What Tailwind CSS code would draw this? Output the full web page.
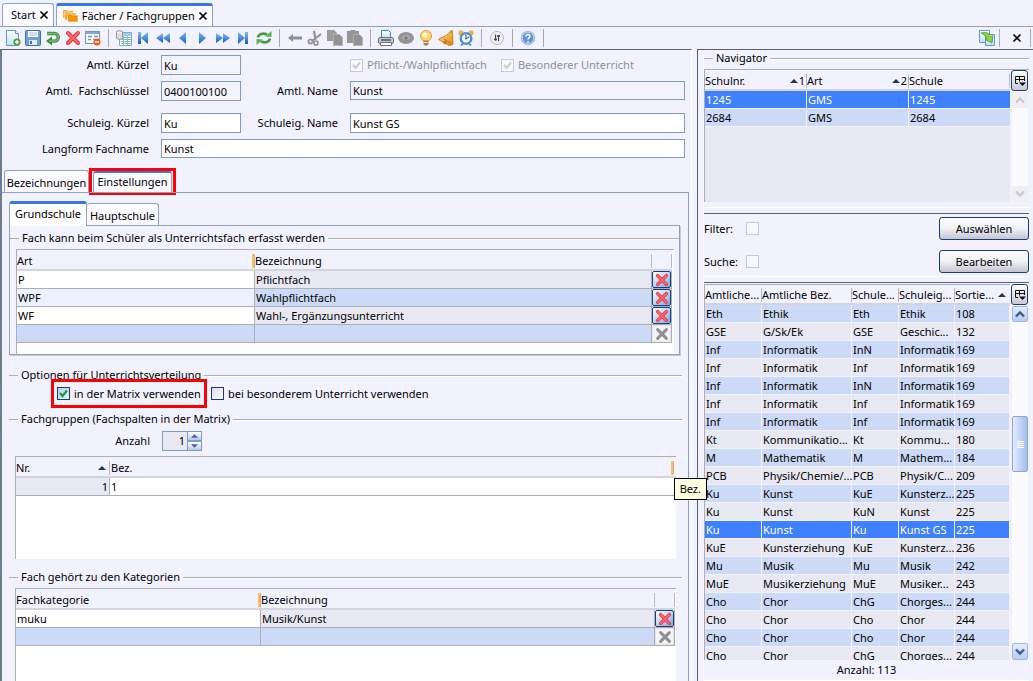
<!DOCTYPE html>
<html lang="de">
<head>
<meta charset="utf-8">
<title>Fächer / Fachgruppen</title>
<script src="https://cdn.jsdelivr.net/npm/@tailwindcss/browser@4"></script>
</head>
<body class="h-screen overflow-hidden bg-[#f2f2ff] font-['Noto_Sans','Open_Sans',sans-serif] text-[11px] leading-4 text-black">
<svg class="absolute size-0" aria-hidden="true">
  <defs>
    <linearGradient id="blue" x1="0" y1="0" x2="0" y2="1"><stop offset="0" stop-color="#7cbcf8"/><stop offset="1" stop-color="#1c5cc4"/></linearGradient>
    <linearGradient id="page" x1="0" y1="0" x2="0" y2="1"><stop offset="0" stop-color="#fff"/><stop offset="1" stop-color="#bfe0f8"/></linearGradient>
    <linearGradient id="gold" x1="0" y1="0" x2="1" y2="1"><stop offset="0" stop-color="#ffe08a"/><stop offset="1" stop-color="#e08a10"/></linearGradient>
    <symbol id="cross" viewBox="0 0 16 16"><path d="M3 3l10 10M13 3L3 13" stroke="#e2343c" stroke-width="4" stroke-linecap="round"/><path d="M3 3l10 10M13 3L3 13" stroke="#ff6464" stroke-width="2.4" stroke-linecap="round"/></symbol>
    <symbol id="cross-off" viewBox="0 0 16 16"><path d="M3 3l10 10M13 3L3 13" stroke="#8f8f8f" stroke-width="3.4" stroke-linecap="round"/></symbol>
    <symbol id="close" viewBox="0 0 10 10"><path d="M1.500 1.500l7 7M8.500 1.500l-7 7" stroke="#000" stroke-width="1.700"/></symbol>
    <symbol id="sort" viewBox="0 0 8 4"><path d="M4 0l4 4H0z" fill="#24364f"/></symbol>
    <symbol id="columns" viewBox="0 0 12 12"><path d="M4 8.500H1.500v-7h9V6M1.500 4.500h9M5.500 1.500v5" stroke="#111" fill="none"/><path d="M5 7.500h7L8.500 11z" fill="#111"/></symbol>
    <symbol id="chev-up" viewBox="0 0 10 8"><path d="M1 6.500l4-4 4 4" stroke="currentColor" stroke-width="2.400" fill="none"/></symbol>
    <symbol id="chev-down" viewBox="0 0 10 8"><path d="M1 1.500l4 4 4-4" stroke="currentColor" stroke-width="2.400" fill="none"/></symbol>
  </defs>
</svg>

<div class="flex h-full flex-col">
  <!-- Document tabs -->
  <nav class="flex h-[26px] shrink-0 items-end gap-0.5 pl-0.5 pt-[3px]">
    <div class="flex h-full items-center gap-[3px] rounded-t-[3px] border border-b-0 border-[#8ea2bd] bg-[#fafaff] pl-2 pr-1">
      <button type="button">Start</button>
      <button type="button" aria-label="Start schließen"><svg class="size-[10px]"><use href="#close"/></svg></button>
    </div>
    <div class="flex h-full items-center gap-[3px] rounded-t-[3px] border border-b-0 border-t-[3px] border-[#8ea2bd] border-t-[#3875ef] bg-[#fafaff] pl-1.5 pr-1">
      <svg class="h-[14px] w-4" viewBox="0 0 16 14"><path d="M0 1h4l1 1h5v7H0z" fill="#fbb040"/><path d="M2 3h4l1 1h6v7H2z" fill="#f59a10" stroke="#fff" stroke-width=".6"/><path d="M4 5h4l1 1h6v7H5z" fill="#f39200" stroke="#fff" stroke-width=".6"/></svg>
      <button type="button">Fächer / Fachgruppen</button>
      <button type="button" aria-label="Fächer schließen"><svg class="size-[10px]"><use href="#close"/></svg></button>
    </div>
  </nav>

  <!-- Toolbar -->
  <div class="flex h-[23px] shrink-0 items-center gap-1 border-t border-[#8ea2bd] pl-[5px] pr-0.5">
    <button type="button" aria-label="Neu"><svg class="size-4" viewBox="0 0 16 16"><path d="M1.500.500h9l3 3v12h-12z" fill="url(#page)" stroke="#5f9ad0"/><path d="M10.500.500v3h3" fill="#fff" stroke="#5f9ad0"/><circle cx="12" cy="12" r="3.600" fill="#5a9e2f"/><path d="M12 10v4M10 12h4" stroke="#fff" stroke-width="1.300"/></svg></button>
    <button type="button" aria-label="Speichern"><svg class="size-4" viewBox="0 0 16 16"><rect x=".5" y=".5" width="15" height="15" rx="1" fill="#6f9fd8" stroke="#3c6fb4"/><path d="M3 1h10v6H3z" fill="#fff"/><path d="M4 3h8M4 5h8" stroke="#a8bcd8"/><path d="M4 10h8v5H4z" fill="#e4edf8"/><path d="M5 11h2v3H5z" fill="#3c6fb4"/></svg></button>
    <button type="button" aria-label="Rückgängig"><svg class="size-4" viewBox="0 0 16 16"><path d="M2 3.500h7.500a3.800 3.800 0 010 7.600H6" stroke="#3b8c3b" stroke-width="3.400" fill="none"/><path d="M7 6.500v9L1 11z" fill="#3b8c3b"/><path d="M2 3.500h7.500a3.800 3.800 0 010 7.600H4" stroke="#79bd70" stroke-width="1.500" fill="none"/></svg></button>
    <button type="button" aria-label="Löschen"><svg class="size-4"><use href="#cross"/></svg></button>
    <button type="button" aria-label="Formular leeren"><svg class="size-4" viewBox="0 0 16 16"><rect x=".5" y="1.500" width="14" height="12" fill="#fff" stroke="#6f94c4"/><path d="M1 2h13v2H1z" fill="#7fa8dc"/><path d="M3 6.500h4M3 9.500h3M9 6.500h4M8 9.500h3" stroke="#7d93b4" stroke-width="1.500"/><circle cx="12" cy="12" r="3.500" fill="#e0641c"/><path d="M10 12h4" stroke="#fff" stroke-width="1.300"/></svg></button>
    <span class="mx-[3px] h-[18px] w-px bg-[#a9a9b4]"></span>
    <button type="button" aria-label="Tabellenansicht"><svg class="size-4" viewBox="0 0 16 16"><path d="M3.500 2.500h12v13h-12z" fill="#fff" stroke="#7fa8cf"/><path d="M4 3h11v3H4z" fill="#a9cbe8"/><path d="M5 7.500h10M5 9.500h10M5 11.500h10M5 13.500h10" stroke="#7fbf86"/><path d="M7.500 6v9M11.500 6v9" stroke="#8fb4dc"/><path d="M.5 1.500q3-2 6 0v7q-3 2-6 0z" fill="#dcdcdc" stroke="#9a9a9a"/><path d="M1 2.500q2.500 1 5 0" stroke="#fff" fill="none"/></svg></button>
    <button type="button" aria-label="Erster"><svg class="size-4" viewBox="0 0 16 16"><path d="M2 2h3v12H2zM12 2v12L5 8z" fill="url(#blue)"/></svg></button>
    <button type="button" aria-label="Seite zurück"><svg class="size-4" viewBox="0 0 16 16"><path d="M7 3v10L0 8zM14 3v10L7 8z" fill="url(#blue)"/></svg></button>
    <button type="button" aria-label="Zurück"><svg class="size-4" viewBox="0 0 16 16"><path d="M10 2v12L3 8z" fill="url(#blue)"/></svg></button>
    <button type="button" aria-label="Weiter"><svg class="size-4" viewBox="0 0 16 16"><path d="M3 2v12l7-6z" fill="url(#blue)"/></svg></button>
    <button type="button" aria-label="Seite vor"><svg class="size-4" viewBox="0 0 16 16"><path d="M0 3v10l7-5zM7 3v10l7-5z" fill="url(#blue)"/></svg></button>
    <button type="button" aria-label="Letzter"><svg class="size-4" viewBox="0 0 16 16"><path d="M2 2v12l7-6zM9 2h3v12H9z" fill="url(#blue)"/></svg></button>
    <button type="button" aria-label="Aktualisieren"><svg class="size-4" viewBox="0 0 16 16"><path d="M2 7.500C2.500 4 7 2.500 11 4.500M14 8.500c-.5 3.500-5 5-9 3" stroke="#4a9a48" stroke-width="2.600" fill="none"/><path d="M9 6.500l6.500.5V1zM7 9.500L.5 9v6z" fill="#5cae55"/></svg></button>
    <span class="mx-[3px] h-[18px] w-px bg-[#a9a9b4]"></span>
    <button type="button" aria-label="Pfeil"><svg class="size-4" viewBox="0 0 16 16"><path d="M1 8l5-4v2.500h9v3H6V12z" fill="#8e8e8e"/></svg></button>
    <button type="button" aria-label="Ausschneiden"><svg class="size-4" viewBox="0 0 16 16"><path d="M7 1l1.500 9M14 4L5 11" stroke="#929292" stroke-width="2.200"/><circle cx="3.500" cy="11.500" r="2" fill="none" stroke="#929292" stroke-width="1.700"/><circle cx="9" cy="13" r="2" fill="none" stroke="#929292" stroke-width="1.700"/></svg></button>
    <button type="button" aria-label="Kopieren"><svg class="size-4" viewBox="0 0 16 16"><path d="M0 0h7l3 3v8H0z" fill="#9c9c9c"/><path d="M6.500 4.500h6l3 3v8h-9z" fill="#929292" stroke="#b4b4b4" stroke-width=".8"/></svg></button>
    <button type="button" aria-label="Einfügen"><svg class="size-4" viewBox="0 0 16 16"><path d="M0 1h3l1-1h4l1 1h3v12H0z" fill="#969696"/><path d="M6.500 4.500h6l3 3v8h-9z" fill="#929292" stroke="#b4b4b4" stroke-width=".8"/></svg></button>
    <span class="mx-[3px] h-[18px] w-px bg-[#a9a9b4]"></span>
    <button type="button" aria-label="Drucken"><svg class="size-4" viewBox="0 0 16 16"><path d="M3.500.500h7l2 2v6h-9z" fill="url(#page)" stroke="#3b84cc"/><rect x=".5" y="7.500" width="15" height="6" rx="1.500" fill="#c9c9cf" stroke="#6f6f78"/><path d="M3 10h10" stroke="#4e4e58" stroke-width="1.500"/><path d="M2.500 12.500h11v3h-11z" fill="#fff" stroke="#6f6f78"/></svg></button>
    <button type="button" aria-label="Vorschau"><svg class="size-4" viewBox="0 0 16 16"><ellipse cx="8" cy="8" rx="8" ry="6" fill="#949494"/><ellipse cx="8" cy="7.500" rx="4" ry="2.500" fill="#a9a9a9"/><circle cx="8" cy="8" r="1.600" fill="#777"/></svg></button>
    <button type="button" aria-label="Tipp"><svg class="size-4" viewBox="0 0 16 16"><circle cx="8" cy="6" r="5.500" fill="#ffd468" stroke="#f0a030"/><circle cx="7" cy="5" r="2.500" fill="#fffbe0"/><path d="M5.500 10.500h5v4l-1.500 1H7l-1.500-1z" fill="#a87a58"/><path d="M5.500 12.500h5" stroke="#ecd8c4"/></svg></button>
    <button type="button" aria-label="Signal"><svg class="size-4" viewBox="0 0 16 16"><path d="M14.500 1L15 14.500 11 15.500.5 9.500C3 6.500 8 7.500 12 1.500z" fill="url(#gold)" stroke="#b87414" stroke-width=".8"/><circle cx="7" cy="12.500" r="1.800" fill="#c47a10"/><path d="M6 9l7 4.500" stroke="#b87414"/><circle cx="13.500" cy="1.500" r="1.500" fill="#d8941c"/></svg></button>
    <button type="button" aria-label="Wecker"><svg class="size-4" viewBox="0 0 16 16"><circle cx="3" cy="3" r="2.700" fill="#f4b23c"/><circle cx="13" cy="3" r="2.700" fill="#f4b23c"/><path d="M3 15.500l2-2M13 15.500l-2-2" stroke="#3f78b8" stroke-width="1.500"/><circle cx="8" cy="8.500" r="5.300" fill="#fff" stroke="#4a92d8" stroke-width="2.400"/><path d="M8 5v4l3-2" stroke="#3468a8" stroke-width="1.200" fill="none"/></svg></button>
    <span class="mx-[3px] h-[18px] w-px bg-[#a9a9b4]"></span>
    <button type="button" aria-label="Einstellungen"><svg class="size-4" viewBox="0 0 16 16"><circle cx="8" cy="8" r="6.500" fill="#f1f1f1" stroke="#b4b4b4"/><path d="M6.500 4.500v6M9.500 5v6" stroke="#444" stroke-width="1.200"/><path d="M5 9.500h3M8 6h3" stroke="#444" stroke-width="1.600"/></svg></button>
    <span class="mx-[3px] h-[18px] w-px bg-[#a9a9b4]"></span>
    <button type="button" aria-label="Hilfe"><svg class="size-4" viewBox="0 0 16 16"><circle cx="8" cy="8" r="6.800" fill="#5b94d4" stroke="#a9bcd4"/><circle cx="8" cy="8" r="5.800" fill="none" stroke="#dce9f8" stroke-width=".8"/><path d="M6 6.500c0-3 4.200-2.600 4 0-.1 1.300-2 1.400-2 3M8 11v1.400" stroke="#fff" stroke-width="1.500" fill="none"/></svg></button>
    <span class="mx-[3px] h-[18px] w-px bg-[#a9a9b4]"></span>
    <span class="flex-1"></span>
    <button type="button" aria-label="Ansicht wechseln"><svg class="size-4" viewBox="0 0 16 16"><path d="M.5.5h10v12H.5z" fill="url(#page)" stroke="#5f9ad0"/><path d="M6.500 4.500h9v11h-9z" fill="url(#page)" stroke="#5f9ad0"/><path d="M2 3c5-1.500 8 0 9.500 3.500L14 5.500 13 13 6 9.500l2-.8C7 6 5 4.500 2 3z" fill="#8fd43c" stroke="#3f8c28" stroke-width=".7"/></svg></button>
    <span class="h-[18px] w-px bg-[#a9a9b4]"></span>
    <button type="button" class="ml-2 mr-1" aria-label="Schließen"><svg class="size-[10px]"><use href="#close"/></svg></button>
    <span class="h-[18px] w-px bg-[#a9a9b4]"></span>
  </div>

  <div class="flex min-h-0 flex-1 gap-[5px]">
    <!-- Detail form -->
    <main class="relative flex min-w-0 flex-1 flex-col border-l-2 border-r border-t border-l-[#6f7c90] border-r-white border-t-[#5c5f6c]">
      <form class="grid shrink-0 grid-cols-[147px_80px_85px_minmax(0,1fr)] gap-x-3 pr-1.5 pt-[5px]">
        <label for="ak" class="self-center text-right">Amtl. Kürzel</label>
        <input id="ak" readonly value="Ku" class="h-5 border border-[#7f9bbd] bg-[#f4f4ff] px-0.5">
        <div class="col-start-4 flex items-center">
          <label class="flex items-center gap-1 text-[#8f8f98]"><span class="relative flex size-[13px]"><input type="checkbox" checked disabled class="size-[13px] appearance-none border border-[#c9c9d4] bg-[#f8f8fb]"><svg class="pointer-events-none absolute inset-0 size-[13px]" viewBox="0 0 13 13"><path d="M3 6l2.500 3L10 3.500" stroke="#c9c9d8" stroke-width="2" fill="none"/></svg></span>Pflicht-/Wahlpflichtfach</label>
          <label class="ml-[14px] flex items-center gap-1 text-[#8f8f98]"><span class="relative flex size-[13px]"><input type="checkbox" checked disabled class="size-[13px] appearance-none border border-[#c9c9d4] bg-[#f8f8fb]"><svg class="pointer-events-none absolute inset-0 size-[13px]" viewBox="0 0 13 13"><path d="M3 6l2.500 3L10 3.500" stroke="#c9c9d8" stroke-width="2" fill="none"/></svg></span>Besonderer Unterricht</label>
        </div>
        <label for="af" class="mt-1.5 self-center whitespace-pre text-right">Amtl.  Fachschlüssel</label>
        <input id="af" readonly value="0400100100" class="mt-1.5 h-5 border border-[#7f9bbd] bg-[#f4f4ff] px-0.5">
        <label for="an" class="mt-1.5 self-center text-right">Amtl. Name</label>
        <input id="an" readonly value="Kunst" class="mt-1.5 h-[19px] border border-[#7f9bbd] bg-[#f4f4ff] px-0.5">
        <label for="sk" class="mt-3 self-center text-right">Schuleig. Kürzel</label>
        <input id="sk" value="Ku" class="mt-3 h-5 border border-[#7f9bbd] bg-white px-0.5">
        <label for="sn" class="mt-3 self-center text-right">Schuleig. Name</label>
        <input id="sn" value="Kunst GS" class="mt-3 h-5 border border-[#7f9bbd] bg-white px-0.5">
        <label for="lf" class="mt-1.5 self-center text-right">Langform Fachname</label>
        <input id="lf" value="Kunst" class="col-span-3 mt-1.5 h-[19px] border border-[#7f9bbd] bg-white px-0.5">
      </form>

      <div role="tablist" class="mt-[10px] flex h-[27px] shrink-0 items-end pl-0.5">
        <button type="button" role="tab" class="mb-[3px] h-[22px] w-[85px] rounded-t-[3px] border border-b-0 border-[#8ea2bd] bg-[#fafaff] whitespace-nowrap pt-0.5">Bezeichnungen</button>
        <div class="h-[27px] w-[87px] border-[3px] border-[#ff0000] px-px"><button type="button" role="tab" aria-selected="true" class="h-[21px] w-full rounded-t-[3px] border border-b-0 border-t-2 border-[#8ea2bd] border-t-[#3875ef] bg-[#fafaff] whitespace-nowrap pb-0.5">Einstellungen</button></div>
      </div>

      <section class="-mt-[3px] mr-0.5 flex min-h-0 flex-1 flex-col border-r border-t border-[#8ea2bd] pl-[7px] pr-1.5">
        <div role="tablist" class="mt-2 flex h-6 shrink-0 items-end">
          <button type="button" role="tab" aria-selected="true" class="relative -mb-px h-[25px] w-[78px] rounded-t-[3px] border border-b-0 border-t-[3px] border-[#8ea2bd] border-t-[#3875ef] bg-white pb-0.5">Grundschule</button>
          <button type="button" role="tab" class="h-[22px] w-[72px] rounded-t-[3px] border border-b-0 border-l-0 border-[#8ea2bd] bg-[#fafaff] whitespace-nowrap pt-0.5">Hauptschule</button>
        </div>
        <div class="mr-0.5 h-[130px] shrink-0 overflow-hidden border border-[#8ea2bd] shadow-[1px_1px_0_#c9c9d4]">
          <fieldset>
            <div class="flex items-center gap-[3px] pt-1 whitespace-nowrap"><span class="h-px w-[9px] bg-[#adadb4]"></span><h2>Fach kann beim Schüler als Unterrichtsfach erfasst werden</h2><span class="h-px flex-1 bg-[#adadb4] shadow-[0_1px_0_white]"></span></div>
            <div class="ml-1.5 mr-[5px] mt-[3px] h-[120px] border-l border-t border-[#adadb4] bg-white">
              <table class="w-full table-fixed border-separate border-spacing-0">
                <colgroup><col class="w-[238px]"><col><col class="w-5"><col class="w-0.5"></colgroup>
                <thead><tr class="h-[21px] text-left">
                  <th class="border-b-2 border-[#d4d4de] bg-[#f2f2ff] p-0 pt-0.5 font-normal"><div class="flex items-center justify-between">Art<span class="h-[14px] w-[3px] border-r border-[#c4b49c] bg-[#fbbf5c]"></span></div></th>
                  <th class="border-b-2 border-[#d4d4de] bg-[#f2f2ff] p-0 pt-0.5 font-normal"><div class="flex items-center justify-between">Bezeichnung<span class="h-[14px] w-px bg-[#b9b9c4]"></span></div></th>
                  <th class="border-b-2 border-[#d4d4de] bg-[#f2f2ff] p-0 pt-0.5"><div class="ml-auto h-[14px] w-px bg-[#b9b9c4]"></div></th><th class="bg-[#fafaff] p-0"></th>
                </tr></thead>
                <tbody>
                  <tr class="h-[18px]"><td class="border-b border-r border-[#adadb4] bg-white py-0 pl-px leading-[17px]">P</td><td class="border-b border-r border-[#adadb4] bg-[#e8e8f2] py-0 pl-px leading-[17px]">Pflichtfach</td><td class="border-b border-r border-[#adadb4] p-0"><button type="button" aria-label="Löschen" class="flex h-[17px] w-[19px] items-center justify-center rounded-[2px] border border-[#163f78] bg-linear-to-br from-white to-[#7da7ea]"><svg class="size-[14px]"><use href="#cross"/></svg></button></td></tr>
                  <tr class="h-[18px]"><td class="border-b border-r border-[#adadb4] bg-[#ecf1ff] py-0 pl-px leading-[17px]">WPF</td><td class="border-b border-r border-[#adadb4] bg-[#ccdaf7] py-0 pl-px leading-[17px]">Wahlpflichtfach</td><td class="border-b border-r border-[#adadb4] p-0"><button type="button" aria-label="Löschen" class="flex h-[17px] w-[19px] items-center justify-center rounded-[2px] border border-[#163f78] bg-linear-to-br from-white to-[#7da7ea]"><svg class="size-[14px]"><use href="#cross"/></svg></button></td></tr>
                  <tr class="h-[18px]"><td class="border-b border-r border-[#adadb4] bg-white py-0 pl-px leading-[17px]">WF</td><td class="border-b border-r border-[#adadb4] bg-[#e8e8f2] py-0 pl-px leading-[17px]">Wahl-, Ergänzungsunterricht</td><td class="border-b border-r border-[#adadb4] p-0"><button type="button" aria-label="Löschen" class="flex h-[17px] w-[19px] items-center justify-center rounded-[2px] border border-[#163f78] bg-linear-to-br from-white to-[#7da7ea]"><svg class="size-[14px]"><use href="#cross"/></svg></button></td></tr>
                  <tr class="h-[18px]"><td class="border-b border-r border-[#adadb4] bg-[#ccdaf7] p-0"></td><td class="border-b border-r border-[#adadb4] bg-[#ccdaf7] p-0"></td><td class="border-b border-r border-[#adadb4] p-0"><button type="button" disabled aria-label="Löschen" class="flex h-[17px] w-[19px] items-center justify-center border border-[#e4e4ea] bg-[#f4f4f6]"><svg class="size-[14px]"><use href="#cross-off"/></svg></button></td></tr>
                </tbody>
              </table>
            </div>
          </fieldset>
        </div>

        <fieldset class="mt-3 shrink-0">
          <div class="flex items-center gap-[3px]"><span class="h-px w-[9px] bg-[#adadb4]"></span><h2>Optionen für Unterrichtsverteilung</h2><span class="h-px flex-1 bg-[#adadb4] shadow-[0_1px_0_white]"></span></div>
          <div class="relative -mt-1 ml-[42px] flex items-center gap-1">
            <label class="flex h-[29px] w-[156px] items-center gap-1 border-[3px] border-[#ff0000] pl-[3px] whitespace-nowrap"><span class="relative flex size-[13px]"><input type="checkbox" checked class="size-[13px] appearance-none border border-[#163f78] bg-linear-to-br from-[#b4cdf8] to-[#e4eeff]"><svg class="pointer-events-none absolute inset-0 size-[13px]" viewBox="0 0 13 13"><path d="M3 6l2.500 3L10 3.500" stroke="#1fa01f" stroke-width="2.200" fill="none"/></svg></span>in der Matrix verwenden</label>
            <label class="flex items-center gap-1 whitespace-nowrap"><input type="checkbox" class="size-[13px] appearance-none border border-[#163f78] bg-linear-to-br from-[#dcdce0] to-white">bei besonderem Unterricht verwenden</label>
          </div>
        </fieldset>

        <fieldset class="mt-[3px] shrink-0">
          <div class="flex items-center gap-[3px]"><span class="h-px w-[9px] bg-[#adadb4]"></span><h2>Fachgruppen (Fachspalten in der Matrix)</h2><span class="h-px flex-1 bg-[#adadb4] shadow-[0_1px_0_white]"></span></div>
          <div class="mt-1 flex items-center gap-3">
            <label for="anz" class="w-[141px] text-right">Anzahl</label>
            <div class="flex h-5">
              <input id="anz" value="1" class="w-[25px] border border-r-0 border-[#7f9bbd] bg-[#e8e8f2] pr-0.5 text-right">
              <div class="flex w-[15px] flex-col">
                <button type="button" aria-label="Mehr" class="flex flex-1 items-center justify-center border border-[#7f9bbd] bg-linear-to-b from-white to-[#b4c8ee]"><svg class="h-1 w-[7px]" viewBox="0 0 8 4"><path d="M4 0l4 4H0z" fill="#46648f"/></svg></button>
                <button type="button" aria-label="Weniger" class="flex flex-1 items-center justify-center border border-[#7f9bbd] bg-linear-to-b from-white to-[#b4c8ee]"><svg class="h-1 w-[7px]" viewBox="0 0 8 4"><path d="M0 0h8L4 4z" fill="#46648f"/></svg></button>
              </div>
            </div>
          </div>
          <div class="ml-1.5 mr-1.5 mt-[5px] h-[103px] border-l border-t border-[#adadb4] bg-white">
            <table class="w-full table-fixed border-separate border-spacing-0">
              <colgroup><col class="w-[94px]"><col></colgroup>
              <thead><tr class="h-[21px] text-left">
                <th class="border-b-2 border-[#d4d4de] bg-[#f2f2ff] p-0 pt-0.5 font-normal"><div class="flex items-center">Nr.<svg class="ml-auto h-1 w-2"><use href="#sort"/></svg><span class="ml-[3px] h-[14px] w-px bg-[#b9b9c4]"></span></div></th>
                <th class="border-b-2 border-[#d4d4de] bg-[#f2f2ff] p-0 pl-px pt-0.5 font-normal"><div class="flex items-center justify-between pr-0.5">Bez.<span class="h-[14px] w-[3px] border-r border-[#c4b49c] bg-[#fbbf5c]"></span></div></th>
              </tr></thead>
              <tbody><tr class="h-[18px]"><td class="border-b border-r border-[#adadb4] bg-[#e8e8f2] py-0 pr-px text-right leading-[17px]">1</td><td class="border-b border-[#adadb4] py-0 pl-px leading-[17px]">1</td></tr></tbody>
            </table>
          </div>
        </fieldset>

        <fieldset class="mt-[10px] shrink-0">
          <div class="flex items-center gap-[3px]"><span class="h-px w-[9px] bg-[#adadb4]"></span><h2>Fach gehört zu den Kategorien</h2><span class="h-px flex-1 bg-[#adadb4] shadow-[0_1px_0_white]"></span></div>
          <div class="ml-1.5 mr-1.5 mt-[3px] h-[120px] border-l border-t border-[#adadb4] bg-white">
            <table class="w-full table-fixed border-separate border-spacing-0">
              <colgroup><col class="w-[245px]"><col><col class="w-5"><col class="w-px"></colgroup>
              <thead><tr class="h-[21px] text-left">
                <th class="border-b-2 border-[#d4d4de] bg-[#f2f2ff] p-0 pt-0.5 font-normal"><div class="flex items-center justify-between">Fachkategorie<span class="h-[14px] w-[3px] border-r border-[#c4b49c] bg-[#fbbf5c]"></span></div></th>
                <th class="border-b-2 border-[#d4d4de] bg-[#f2f2ff] p-0 pt-0.5 font-normal"><div class="flex items-center justify-between">Bezeichnung<span class="h-[14px] w-px bg-[#b9b9c4]"></span></div></th>
                <th class="border-b-2 border-[#d4d4de] bg-[#f2f2ff] p-0 pt-0.5"><div class="ml-auto h-[14px] w-px bg-[#b9b9c4]"></div></th><th class="p-0"></th>
              </tr></thead>
              <tbody>
                <tr class="h-[18px]"><td class="border-b border-r border-[#adadb4] bg-white py-0 pl-px leading-[17px]">muku</td><td class="border-b border-r border-[#adadb4] bg-[#e8e8f2] py-0 pl-px leading-[17px]">Musik/Kunst</td><td class="border-b border-r border-[#adadb4] p-0"><button type="button" aria-label="Löschen" class="flex h-[17px] w-[19px] items-center justify-center rounded-[2px] border border-[#163f78] bg-linear-to-br from-white to-[#7da7ea]"><svg class="size-[14px]"><use href="#cross"/></svg></button></td></tr>
                <tr class="h-[18px]"><td class="border-b border-r border-[#adadb4] bg-[#ccdaf7] p-0"></td><td class="border-b border-r border-[#adadb4] bg-[#ccdaf7] p-0"></td><td class="border-b border-r border-[#adadb4] p-0"><button type="button" disabled aria-label="Löschen" class="flex h-[17px] w-[19px] items-center justify-center border border-[#e4e4ea] bg-[#f4f4f6]"><svg class="size-[14px]"><use href="#cross-off"/></svg></button></td></tr>
              </tbody>
            </table>
          </div>
        </fieldset>
      </section>
      <div role="tooltip" class="absolute -right-4 top-[428px] z-10 border border-black bg-[#ffffe1] px-[5px] py-0.5">Bez.</div>
    </main>

    <!-- Navigator -->
    <aside class="flex w-[336px] shrink-0 flex-col border-l border-t border-[#5c5f6c] pl-1.5 pr-1">
      <div class="flex shrink-0 items-center gap-[3px]"><span class="h-px w-[9px] bg-[#adadb4]"></span><h2>Navigator</h2><span class="h-px flex-1 bg-[#adadb4] shadow-[0_1px_0_white]"></span></div>
      <div class="mt-[3px] flex h-[133px] shrink-0 border-l border-t border-[#adadb4]">
        <div class="min-w-0 flex-1 bg-[#e8e8f2]">
          <table class="w-full table-fixed border-separate border-spacing-0">
            <colgroup><col class="w-[102px]"><col class="w-[102px]"><col></colgroup>
            <thead><tr class="h-[21px] text-left">
              <th class="border-b-2 border-[#d4d4de] bg-[#f2f2ff] p-0 pt-0.5 font-normal"><div class="flex items-center">Schulnr.<svg class="ml-auto mr-px h-1 w-2"><use href="#sort"/></svg>1<span class="ml-px h-[14px] w-px bg-[#b9b9c4]"></span></div></th>
              <th class="border-b-2 border-[#d4d4de] bg-[#f2f2ff] p-0 pt-0.5 font-normal"><div class="flex items-center">Art<svg class="ml-auto mr-px h-1 w-2"><use href="#sort"/></svg>2<span class="ml-px h-[14px] w-px bg-[#b9b9c4]"></span></div></th>
              <th class="border-b-2 border-[#d4d4de] bg-[#f2f2ff] p-0 pt-0.5 font-normal"><div class="flex items-center justify-between">Schule<span class="h-[14px] w-px bg-[#b9b9c4]"></span></div></th>
            </tr></thead>
            <tbody>
              <tr class="h-[18px] bg-[#3f80ff] text-white"><td class="border-b border-r border-[#f2f2ff] py-0 pl-px leading-[17px]">1245</td><td class="border-b border-r border-[#f2f2ff] py-0 pl-px leading-[17px]">GMS</td><td class="border-b border-[#f2f2ff] py-0 pl-px leading-[17px]">1245</td></tr>
              <tr class="h-[18px] bg-[#ccdaf7]"><td class="border-b border-r border-[#f2f2ff] py-0 pl-px leading-[17px]">2684</td><td class="border-b border-r border-[#f2f2ff] py-0 pl-px leading-[17px]">GMS</td><td class="border-b border-[#f2f2ff] py-0 pl-px leading-[17px]">2684</td></tr>
            </tbody>
          </table>
        </div>
        <div class="flex w-[19px] flex-col items-end pr-px">
          <button type="button" aria-label="Spalten" class="flex h-[21px] w-[17px] shrink-0 items-center justify-center rounded-[3px] border border-[#163f78] bg-linear-to-b from-white to-[#c9c9d8]"><svg class="size-3"><use href="#columns"/></svg></button>
          <div class="mt-px flex w-4 flex-1 flex-col justify-between bg-[#fafaff] text-[#c9c9ce]">
            <span class="flex h-4 items-center justify-center bg-[#f0f0f4]"><svg class="h-2 w-[10px]"><use href="#chev-up"/></svg></span>
            <span class="flex h-4 items-center justify-center bg-[#f0f0f4]"><svg class="h-2 w-[10px]"><use href="#chev-down"/></svg></span>
          </div>
        </div>
      </div>
      <div class="mt-[5px] flex shrink-0 flex-col gap-[10px] border-b border-t border-white pb-[3px]">
        <div class="mt-[5px] flex items-center border-t border-[#5c5f6c] pt-[3px]">
          <label for="fi" class="w-[42px]">Filter:</label><input id="fi" type="checkbox" class="size-[13px] appearance-none border border-[#c9c9d4] bg-[#f8f8fb]">
          <button type="button" class="ml-auto h-[23px] w-[90px] rounded-[3px] border border-[#163f78] bg-linear-to-b from-white via-[#f0f0f6] to-[#c4c4d0]">Auswählen</button>
        </div>
        <div class="flex items-center">
          <label for="su" class="w-[42px]">Suche:</label><input id="su" type="checkbox" class="size-[13px] appearance-none border border-[#c9c9d4] bg-[#f8f8fb]">
          <button type="button" class="ml-auto h-[23px] w-[90px] rounded-[3px] border border-[#163f78] bg-linear-to-b from-white via-[#f0f0f6] to-[#c4c4d0]">Bearbeiten</button>
        </div>
      </div>
      <div class="mt-[5px] flex min-h-0 flex-1 border-t border-[#5c5f6c] pt-px">
        <div class="min-w-0 flex-1 overflow-hidden border-l border-t border-[#adadb4]">
          <table class="w-full table-fixed border-separate border-spacing-0">
            <colgroup><col class="w-[57px]"><col class="w-[90px]"><col class="w-[47px]"><col class="w-14"><col></colgroup>
            <thead><tr class="h-5 text-left whitespace-nowrap">
              <th class="border-b-2 border-[#d4d4de] bg-[#f2f2ff] p-0 pt-0.5 font-normal"><div class="flex items-center justify-between">Amtliche...<span class="h-[14px] w-px bg-[#b9b9c4]"></span></div></th>
              <th class="border-b-2 border-[#d4d4de] bg-[#f2f2ff] p-0 pt-0.5 font-normal"><div class="flex items-center justify-between">Amtliche Bez.<span class="h-[14px] w-px bg-[#b9b9c4]"></span></div></th>
              <th class="border-b-2 border-[#d4d4de] bg-[#f2f2ff] p-0 pt-0.5 font-normal"><div class="flex items-center justify-between">Schule...<span class="h-[14px] w-px bg-[#b9b9c4]"></span></div></th>
              <th class="border-b-2 border-[#d4d4de] bg-[#f2f2ff] p-0 pt-0.5 font-normal"><div class="flex items-center justify-between">Schuleig...<span class="h-[14px] w-px bg-[#b9b9c4]"></span></div></th>
              <th class="border-b-2 border-[#d4d4de] bg-[#f2f2ff] p-0 pt-0.5 font-normal"><div class="flex items-center justify-between pr-1">Sortie...<svg class="h-1 w-2"><use href="#sort"/></svg></div></th>
            </tr></thead>
            <tbody id="faecher"></tbody>
          </table>
        </div>
        <div class="flex w-[19px] flex-col items-end pr-px">
          <button type="button" aria-label="Spalten" class="flex h-[21px] w-[17px] shrink-0 items-center justify-center rounded-[3px] border border-[#163f78] bg-linear-to-b from-white to-[#c9c9d8]"><svg class="size-3"><use href="#columns"/></svg></button>
          <div class="mt-px flex w-4 flex-1 flex-col bg-[#fafaff] text-[#3c5c8c]">
            <button type="button" aria-label="Nach oben" class="flex h-4 shrink-0 items-center justify-center rounded-[2px] border border-[#9fb8e0] bg-linear-to-b from-[#e4ecff] to-[#b9ccf4]"><svg class="h-2 w-[10px]"><use href="#chev-up"/></svg></button>
            <span class="basis-[94px]"></span>
            <span class="flex h-14 shrink-0 flex-col items-center justify-center gap-px rounded-[2px] border border-[#8fa9d4] bg-linear-to-r from-[#e4ecff] to-[#a4bcec]"><i class="h-px w-[7px] bg-white"></i><i class="h-px w-[7px] bg-white"></i><i class="h-px w-[7px] bg-white"></i><i class="h-px w-[7px] bg-white"></i></span>
            <button type="button" aria-label="Nach unten" class="mt-auto flex h-[17px] shrink-0 items-center justify-center rounded-[2px] border border-[#9fb8e0] bg-linear-to-b from-[#e4ecff] to-[#b9ccf4]"><svg class="h-2 w-[10px]"><use href="#chev-down"/></svg></button>
          </div>
        </div>
      </div>
      <p class="shrink-0 border-b border-white pb-0.5 pt-px text-center leading-[17px]">Anzahl: 113</p>
    </aside>
  </div>
</div>
<script>
const rows = [
  ['Eth','Ethik','Eth','Ethik','108'],['GSE','G/Sk/Ek','GSE','Geschic...','132'],
  ['Inf','Informatik','InN','Informatik','169'],['Inf','Informatik','Inf','Informatik','169'],
  ['Inf','Informatik','InN','Informatik','169'],['Inf','Informatik','Inf','Informatik','169'],
  ['Inf','Informatik','Inf','Informatik','169'],['Kt','Kommunikatio...','Kt','Kommu...','180'],
  ['M','Mathematik','M','Mathem...','184'],['PCB','Physik/Chemie/...','PCB','Physik/C...','209'],
  ['Ku','Kunst','KuE','Kunsterz...','225'],['Ku','Kunst','KuN','Kunst','225'],
  ['Ku','Kunst','Ku','Kunst GS','225'],['KuE','Kunsterziehung','KuE','Kunsterz...','236'],
  ['Mu','Musik','Mu','Musik','242'],['MuE','Musikerziehung','MuE','Musiker...','243'],
  ['Cho','Chor','ChG','Chorges...','244'],['Cho','Chor','Cho','Chor','244'],
  ['Cho','Chor','Cho','Chor','244'],['Cho','Chor','ChG','Chorges...','244']
];
const selected = 12;
document.getElementById('faecher').innerHTML = rows.map((r, i) => {
  const tone = i === selected ? 'h-[18px] bg-[#3f80ff] text-white' : i % 2 ? 'h-[18px] bg-[#e8e8f2]' : 'h-[18px] bg-[#ccdaf7]';
  return `<tr class="${tone}">` + r.map(c => `<td class="border-b border-r border-[#f2f2ff] py-0 pl-px leading-[17px] whitespace-nowrap">${c}</td>`).join('') + '</tr>';
}).join('');
</script>
</body>
</html>
